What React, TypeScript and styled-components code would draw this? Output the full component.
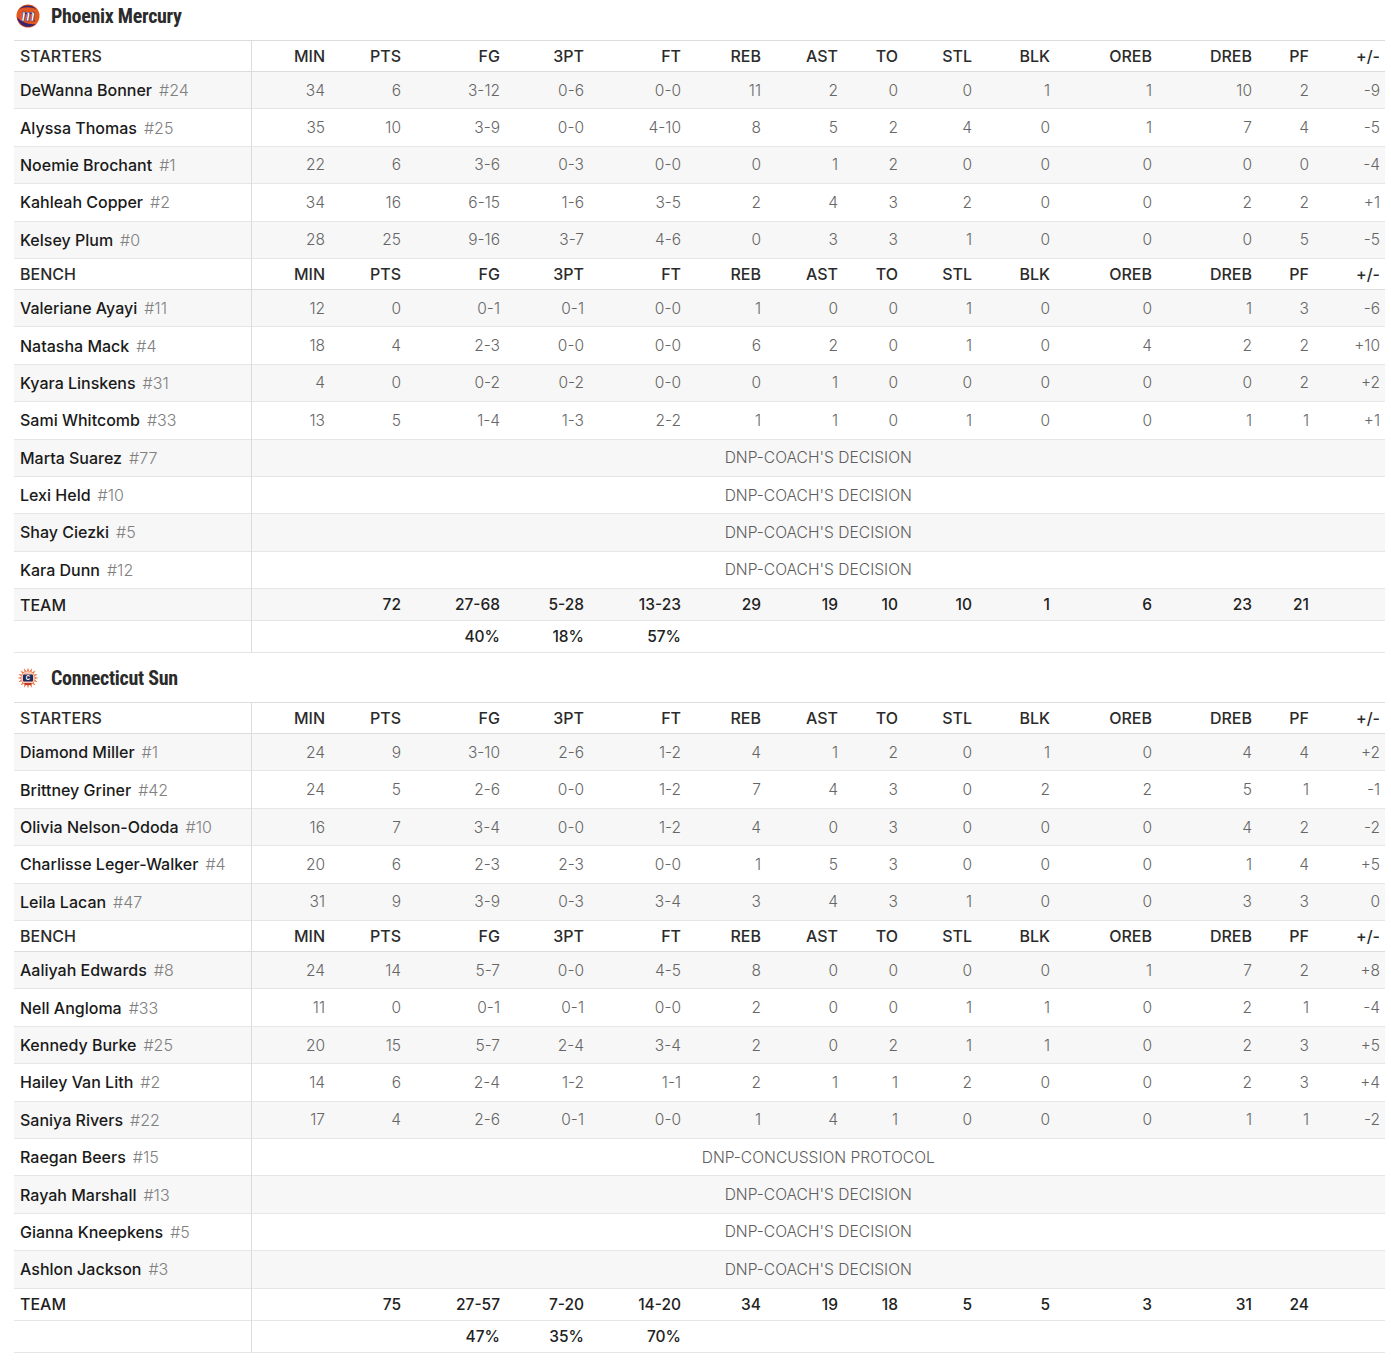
import styled, { createGlobalStyle } from 'styled-components';

const GlobalStyle = createGlobalStyle`
  body {
    margin: 0;
    background: #fff;
    font-family: Inter, Roboto, 'Liberation Sans', sans-serif;
  }
`;

const Page = styled.div`
  padding: 0 6px 0 14px;
  display: flex;
  flex-direction: column;
  gap: 9px;
`;

const TeamHeader = styled.div`
  height: 40px;
  padding: 0 0 8px 2px;
  box-sizing: border-box;
  display: flex;
  align-items: center;
  gap: 11px;
`;

const TeamName = styled.h2`
  margin: 0;
  font-family: 'Roboto Condensed', 'Liberation Sans Narrow', Roboto, sans-serif;
  font-size: 20px;
  font-weight: 700;
  color: #2b2b2b;
  letter-spacing: -0.3px;
`;

const Table = styled.table`
  width: 100%;
  border-collapse: collapse;
  table-layout: fixed;
  font-size: 16px;
`;

const HeadRow = styled.tr`
  background: #fff;
  border-top: 1px solid #dcdcdc;
  border-bottom: 1px solid #dcdcdc;
`;

const HeadCell = styled.td<{ $first?: boolean }>`
  height: 30px;
  padding: 0 ${p => (p.$first ? '0 0 6px' : '5px 0 0')};
  text-align: ${p => (p.$first ? 'left' : 'right')};
  font-weight: 500;
  color: #2b2b2b;
  border-right: ${p => (p.$first ? '1px solid #dcdcdc' : 'none')};
`;

const Row = styled.tr<{ $striped?: boolean }>`
  background: ${p => (p.$striped ? '#f7f7f7' : '#fff')};
  border-bottom: 1px solid #e6e6e6;
`;

const NameCell = styled.td<{ $h: number }>`
  height: ${p => p.$h}px;
  padding: 0 0 0 6px;
  border-right: 1px solid #dcdcdc;
  white-space: nowrap;
  overflow: hidden;
`;

const PlayerName = styled.span`
  font-weight: 500;
  color: #1a1a1a;
`;

const Jersey = styled.span`
  margin-left: 7px;
  font-weight: 300;
  color: #808080;
`;

const TeamLabel = styled.span`
  font-weight: 500;
  color: #1f1f1f;
`;

const StatCell = styled.td<{ $bold?: boolean }>`
  padding: 0 5px 0 0;
  text-align: right;
  font-size: 15.5px;
  font-weight: ${p => (p.$bold ? 500 : 300)};
  color: ${p => (p.$bold ? '#222' : '#666')};
`;

const DnpCell = styled.td`
  text-align: center;
  font-size: 15.6px;
  font-weight: 300;
  color: #5e5e5e;
`;

const cols = [79, 76, 99, 84, 97, 80, 77, 60, 74, 78, 102, 100, 57, 71];
const heads = ['MIN', 'PTS', 'FG', '3PT', 'FT', 'REB', 'AST', 'TO', 'STL', 'BLK', 'OREB', 'DREB', 'PF', '+/-'];

type Player = { name: string; num: string; stats?: string; dnp?: string };
type Team = {
  name: string;
  logo: 'mercury' | 'sun';
  starters: Player[];
  bench: Player[];
  totals: string;
  pct: string[];
};

const COACH = "DNP-COACH'S DECISION";

const teams: Team[] = [
  {
    name: 'Phoenix Mercury',
    logo: 'mercury',
    starters: [
      { name: 'DeWanna Bonner', num: '#24', stats: '34 6 3-12 0-6 0-0 11 2 0 0 1 1 10 2 -9' },
      { name: 'Alyssa Thomas', num: '#25', stats: '35 10 3-9 0-0 4-10 8 5 2 4 0 1 7 4 -5' },
      { name: 'Noemie Brochant', num: '#1', stats: '22 6 3-6 0-3 0-0 0 1 2 0 0 0 0 0 -4' },
      { name: 'Kahleah Copper', num: '#2', stats: '34 16 6-15 1-6 3-5 2 4 3 2 0 0 2 2 +1' },
      { name: 'Kelsey Plum', num: '#0', stats: '28 25 9-16 3-7 4-6 0 3 3 1 0 0 0 5 -5' },
    ],
    bench: [
      { name: 'Valeriane Ayayi', num: '#11', stats: '12 0 0-1 0-1 0-0 1 0 0 1 0 0 1 3 -6' },
      { name: 'Natasha Mack', num: '#4', stats: '18 4 2-3 0-0 0-0 6 2 0 1 0 4 2 2 +10' },
      { name: 'Kyara Linskens', num: '#31', stats: '4 0 0-2 0-2 0-0 0 1 0 0 0 0 0 2 +2' },
      { name: 'Sami Whitcomb', num: '#33', stats: '13 5 1-4 1-3 2-2 1 1 0 1 0 0 1 1 +1' },
      { name: 'Marta Suarez', num: '#77', dnp: COACH },
      { name: 'Lexi Held', num: '#10', dnp: COACH },
      { name: 'Shay Ciezki', num: '#5', dnp: COACH },
      { name: 'Kara Dunn', num: '#12', dnp: COACH },
    ],
    totals: '_ 72 27-68 5-28 13-23 29 19 10 10 1 6 23 21 _',
    pct: ['40%', '18%', '57%'],
  },
  {
    name: 'Connecticut Sun',
    logo: 'sun',
    starters: [
      { name: 'Diamond Miller', num: '#1', stats: '24 9 3-10 2-6 1-2 4 1 2 0 1 0 4 4 +2' },
      { name: 'Brittney Griner', num: '#42', stats: '24 5 2-6 0-0 1-2 7 4 3 0 2 2 5 1 -1' },
      { name: 'Olivia Nelson-Ododa', num: '#10', stats: '16 7 3-4 0-0 1-2 4 0 3 0 0 0 4 2 -2' },
      { name: 'Charlisse Leger-Walker', num: '#4', stats: '20 6 2-3 2-3 0-0 1 5 3 0 0 0 1 4 +5' },
      { name: 'Leila Lacan', num: '#47', stats: '31 9 3-9 0-3 3-4 3 4 3 1 0 0 3 3 0' },
    ],
    bench: [
      { name: 'Aaliyah Edwards', num: '#8', stats: '24 14 5-7 0-0 4-5 8 0 0 0 0 1 7 2 +8' },
      { name: 'Nell Angloma', num: '#33', stats: '11 0 0-1 0-1 0-0 2 0 0 1 1 0 2 1 -4' },
      { name: 'Kennedy Burke', num: '#25', stats: '20 15 5-7 2-4 3-4 2 0 2 1 1 0 2 3 +5' },
      { name: 'Hailey Van Lith', num: '#2', stats: '14 6 2-4 1-2 1-1 2 1 1 2 0 0 2 3 +4' },
      { name: 'Saniya Rivers', num: '#22', stats: '17 4 2-6 0-1 0-0 1 4 1 0 0 0 1 1 -2' },
      { name: 'Raegan Beers', num: '#15', dnp: 'DNP-CONCUSSION PROTOCOL' },
      { name: 'Rayah Marshall', num: '#13', dnp: COACH },
      { name: 'Gianna Kneepkens', num: '#5', dnp: COACH },
      { name: 'Ashlon Jackson', num: '#3', dnp: COACH },
    ],
    totals: '_ 75 27-57 7-20 14-20 34 19 18 5 5 3 31 24 _',
    pct: ['47%', '35%', '70%'],
  },
];

const MercuryLogo = () => (
  <svg width="24" height="24" viewBox="0 0 24 24">
    <circle cx="12" cy="12" r="11.5" fill="#e4571e" />
    <path d="M1 13 A11.5 11.5 0 0 0 20 20 C13 21 5 18 1 13 Z" fill="#3a2470" />
    <path d="M3 5.5 C8 2.5 15 2.5 20.5 5.5 A11.5 11.5 0 0 0 3 5.5 Z" fill="#3a2470" />
    <text
      x="12.2"
      y="16.5"
      textAnchor="middle"
      fontFamily="'Liberation Serif', serif"
      fontStyle="italic"
      fontWeight="700"
      fontSize="18"
      fill="#fff"
      stroke="#3a2470"
      strokeWidth="0.6"
    >
      m
    </text>
  </svg>
);

const sunRays = Array.from({ length: 32 }, (_, i) => {
  const a = (i * Math.PI) / 16 - Math.PI / 2;
  const r = i % 2 === 0 ? 10.5 : 6.5;
  return `${(12 + r * Math.cos(a)).toFixed(2)},${(12 + r * Math.sin(a)).toFixed(2)}`;
}).join(' ');

const SunLogo = () => (
  <svg width="24" height="24" viewBox="0 0 24 24">
    <polygon points={sunRays} fill="#ee7b4f" />
    <circle cx="12" cy="12" r="6.8" fill="#f9c9b2" />
    <rect x="7" y="8.5" width="10" height="7" rx="1" fill="#1e2a5c" />
    <text x="12" y="14.3" textAnchor="middle" fontFamily="Roboto, sans-serif" fontWeight="700" fontSize="6.5" fill="#fff">
      C
    </text>
    <path d="M8 17 h8 l-1 2 h-6 Z" fill="#c0392b" />
  </svg>
);

const PlayerRow = ({ p, striped }: { p: Player; striped: boolean }) => (
  <Row $striped={striped}>
    <NameCell $h={36.4}>
      <PlayerName>{p.name}</PlayerName>
      <Jersey>{p.num}</Jersey>
    </NameCell>
    {p.dnp ? (
      <DnpCell colSpan={14}>{p.dnp}</DnpCell>
    ) : (
      p.stats!.split(' ').map((s, i) => <StatCell key={i}>{s}</StatCell>)
    )}
  </Row>
);

const SectionHead = ({ label }: { label: string }) => (
  <HeadRow>
    <HeadCell $first>{label}</HeadCell>
    {heads.map(h => (
      <HeadCell key={h}>{h}</HeadCell>
    ))}
  </HeadRow>
);

const BoxScore = ({ team }: { team: Team }) => {
  const pctCells = ['', '', ...team.pct, '', '', '', '', '', '', '', '', ''];
  return (
    <section>
      <TeamHeader>
        {team.logo === 'mercury' ? <MercuryLogo /> : <SunLogo />}
        <TeamName>{team.name}</TeamName>
      </TeamHeader>
      <Table>
        <colgroup>
          <col style={{ width: 237 }} />
          {cols.map((w, i) => (
            <col key={i} style={{ width: w }} />
          ))}
        </colgroup>
        <tbody>
          <SectionHead label="STARTERS" />
          {team.starters.map((p, i) => (
            <PlayerRow key={p.name} p={p} striped={i % 2 === 0} />
          ))}
          <SectionHead label="BENCH" />
          {team.bench.map((p, i) => (
            <PlayerRow key={p.name} p={p} striped={i % 2 === 0} />
          ))}
          <Row $striped={team.bench.length % 2 === 0}>
            <NameCell $h={31}>
              <TeamLabel>TEAM</TeamLabel>
            </NameCell>
            {team.totals.split(' ').map((s, i) => (
              <StatCell key={i} $bold>
                {s === '_' ? '' : s}
              </StatCell>
            ))}
          </Row>
          <Row>
            <NameCell $h={31} />
            {pctCells.map((s, i) => (
              <StatCell key={i} $bold>
                {s}
              </StatCell>
            ))}
          </Row>
        </tbody>
      </Table>
    </section>
  );
};

export default function App() {
  return (
    <>
      <GlobalStyle />
      <Page>
        {teams.map(t => (
          <BoxScore key={t.name} team={t} />
        ))}
      </Page>
    </>
  );
}
